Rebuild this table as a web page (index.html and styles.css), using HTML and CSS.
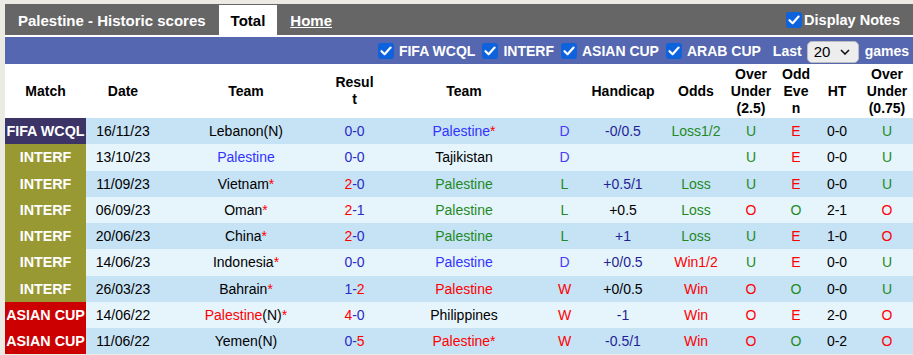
FILE: index.html
```
<!DOCTYPE html>
<html>
<head>
<meta charset="utf-8">
<link rel="stylesheet" href="styles.css">
</head>
<body>
<div class="page">
  <div class="topbar">
    <span class="title">Palestine - Historic scores</span>
    <span class="tab active">Total</span>
    <span class="tab link">Home</span>
    <span class="notes"><span class="cb"><svg viewBox="0 0 16 16" width="16" height="16"><path d="M3.5 8.2 L6.6 11.2 L12.6 4.6" fill="none" stroke="#fff" stroke-width="2.2" stroke-linecap="round" stroke-linejoin="round"/></svg></span>Display Notes</span>
  </div>
  <div class="filterbar">
    <span class="flt"><span class="cb"><svg viewBox="0 0 16 16" width="16" height="16"><path d="M3.5 8.2 L6.6 11.2 L12.6 4.6" fill="none" stroke="#fff" stroke-width="2.2" stroke-linecap="round" stroke-linejoin="round"/></svg></span>FIFA WCQL</span>
    <span class="flt"><span class="cb"><svg viewBox="0 0 16 16" width="16" height="16"><path d="M3.5 8.2 L6.6 11.2 L12.6 4.6" fill="none" stroke="#fff" stroke-width="2.2" stroke-linecap="round" stroke-linejoin="round"/></svg></span>INTERF</span>
    <span class="flt"><span class="cb"><svg viewBox="0 0 16 16" width="16" height="16"><path d="M3.5 8.2 L6.6 11.2 L12.6 4.6" fill="none" stroke="#fff" stroke-width="2.2" stroke-linecap="round" stroke-linejoin="round"/></svg></span>ASIAN CUP</span>
    <span class="flt"><span class="cb"><svg viewBox="0 0 16 16" width="16" height="16"><path d="M3.5 8.2 L6.6 11.2 L12.6 4.6" fill="none" stroke="#fff" stroke-width="2.2" stroke-linecap="round" stroke-linejoin="round"/></svg></span>ARAB CUP</span>
    <span class="last">Last</span>
    <span class="select">20<svg viewBox="0 0 10 6" width="10" height="6"><path d="M1 1 L5 5 L9 1" fill="none" stroke="#111" stroke-width="1.6"/></svg></span>
    <span class="games">games</span>
  </div>
  <table class="scores">
    <colgroup>
      <col class="c-match"><col class="c-date"><col class="c-team"><col class="c-res"><col class="c-team2"><col class="c-wl"><col class="c-hc"><col class="c-odds"><col class="c-ou"><col class="c-oe"><col class="c-ht"><col class="c-ou2">
    </colgroup>
    <thead>
      <tr>
        <th>Match</th><th>Date</th><th>Team</th><th>Resul t</th><th>Team</th><th></th><th>Handicap</th><th>Odds</th><th>Over Under (2.5)</th><th>Odd Eve n</th><th>HT</th><th>Over Under (0.75)</th>
      </tr>
    </thead>
    <tbody>
      <tr class="dk">
        <td class="lg wcql">FIFA WCQL</td><td>16/11/23</td><td>Lebanon(N)</td><td class="sc">0-0</td><td><span class="bl">Palestine</span><span class="r">*</span></td><td class="dd">D</td><td class="nv">-0/0.5</td><td class="g">Loss1/2</td><td class="g">U</td><td class="r">E</td><td>0-0</td><td class="g">U</td>
      </tr>
      <tr class="lt">
        <td class="lg interf">INTERF</td><td>13/10/23</td><td class="bl">Palestine</td><td class="sc">0-0</td><td>Tajikistan</td><td class="dd">D</td><td></td><td></td><td class="g">U</td><td class="r">E</td><td>0-0</td><td class="g">U</td>
      </tr>
      <tr class="dk">
        <td class="lg interf">INTERF</td><td>11/09/23</td><td>Vietnam<span class="r">*</span></td><td class="sc"><span class="r">2</span>-0</td><td class="g">Palestine</td><td class="g">L</td><td class="nv">+0.5/1</td><td class="g">Loss</td><td class="g">U</td><td class="r">E</td><td>0-0</td><td class="g">U</td>
      </tr>
      <tr class="lt">
        <td class="lg interf">INTERF</td><td>06/09/23</td><td>Oman<span class="r">*</span></td><td class="sc"><span class="r">2</span>-1</td><td class="g">Palestine</td><td class="g">L</td><td>+0.5</td><td class="g">Loss</td><td class="r">O</td><td class="g">O</td><td>2-1</td><td class="r">O</td>
      </tr>
      <tr class="dk">
        <td class="lg interf">INTERF</td><td>20/06/23</td><td>China<span class="r">*</span></td><td class="sc"><span class="r">2</span>-0</td><td class="g">Palestine</td><td class="g">L</td><td class="nv">+1</td><td class="g">Loss</td><td class="g">U</td><td class="r">E</td><td>1-0</td><td class="r">O</td>
      </tr>
      <tr class="lt">
        <td class="lg interf">INTERF</td><td>14/06/23</td><td>Indonesia<span class="r">*</span></td><td class="sc">0-0</td><td class="bl">Palestine</td><td class="dd">D</td><td class="nv">+0/0.5</td><td class="r">Win1/2</td><td class="g">U</td><td class="r">E</td><td>0-0</td><td class="g">U</td>
      </tr>
      <tr class="dk">
        <td class="lg interf">INTERF</td><td>26/03/23</td><td>Bahrain<span class="r">*</span></td><td class="sc">1-<span class="r">2</span></td><td class="r">Palestine</td><td class="r">W</td><td>+0/0.5</td><td class="r">Win</td><td class="r">O</td><td class="g">O</td><td>0-0</td><td class="g">U</td>
      </tr>
      <tr class="lt">
        <td class="lg asian">ASIAN CUP</td><td>14/06/22</td><td><span class="r">Palestine</span>(N)<span class="r">*</span></td><td class="sc"><span class="r">4</span>-0</td><td>Philippines</td><td class="r">W</td><td class="nv">-1</td><td class="r">Win</td><td class="r">O</td><td class="r">E</td><td>2-0</td><td class="r">O</td>
      </tr>
      <tr class="dk">
        <td class="lg asian">ASIAN CUP</td><td>11/06/22</td><td>Yemen(N)</td><td class="sc">0-<span class="r">5</span></td><td class="r">Palestine*</td><td class="r">W</td><td class="nv">-0.5/1</td><td class="r">Win</td><td class="r">O</td><td class="g">O</td><td>0-2</td><td class="r">O</td>
      </tr>
    </tbody>
  </table>
</div>
</body>
</html>
```
FILE: styles.css
```
html, body {
  margin: 0;
  padding: 0;
  background: #ebebe4;
  font-family: "Liberation Sans", Arial, sans-serif;
  overflow: hidden;
}
.page {
  margin: 4px 0 0 5px;
  width: 908px;
}
.topbar {
  display: flex;
  align-items: stretch;
  height: 30px;
  padding-top: 1px;
  background: #666666;
  border-bottom: 2px solid #ffffff;
  color: #fff;
  font-weight: bold;
  font-size: 15px;
}
.title {
  display: flex;
  align-items: center;
  padding-left: 13px;
  padding-right: 13px;
}
.tab {
  display: flex;
  align-items: center;
  padding: 0 12px;
}
.tab.active {
  background: #fff;
  color: #000;
}
.tab.link {
  text-decoration: underline;
  padding-left: 13px;
}
.notes {
  margin-left: auto;
  display: flex;
  align-items: center;
  font-size: 14.5px;
  padding-right: 13px;
}
.cb {
  display: inline-flex;
  width: 16px;
  height: 16px;
  background: #0e63dc;
  border-radius: 3px;
  margin-right: 2px;
}
.filterbar {
  display: flex;
  align-items: center;
  justify-content: flex-end;
  height: 27px;
  background: #5467b0;
  color: #fff;
  font-weight: bold;
  font-size: 14px;
  padding-right: 4px;
}
.flt {
  display: flex;
  align-items: center;
  margin-left: 7px;
}
.flt .cb {
  margin-right: 5px;
}
.last {
  margin-left: 12px;
}
.select {
  display: inline-flex;
  align-items: center;
  justify-content: space-between;
  box-sizing: border-box;
  width: 52px;
  height: 22px;
  margin: 2px 6px 0 5px;
  padding: 0 8px 0 6px;
  background: #ededed;
  border: 1px solid #bdbdbd;
  border-radius: 5px;
  color: #000;
  font-weight: normal;
  font-size: 15px;
}
.scores {
  border-collapse: collapse;
  table-layout: fixed;
  width: 909px;
  font-size: 14px;
}
.c-match { width: 81px; }
.c-date { width: 74px; }
.c-team { width: 172px; }
.c-res { width: 45px; }
.c-team2 { width: 174px; }
.c-wl { width: 27px; }
.c-hc { width: 90px; }
.c-odds { width: 56px; }
.c-ou { width: 54px; }
.c-oe { width: 36px; }
.c-ht { width: 46px; }
.c-ou2 { width: 54px; }
.scores th {
  background: #fff;
  height: 54px;
  padding: 0 2px;
  font-weight: bold;
  line-height: 17px;
  text-align: center;
  vertical-align: middle;
  color: #000;
}
.scores td {
  height: 26.25px;
  padding: 0;
  text-align: center;
  vertical-align: middle;
  line-height: 16px;
  color: #000;
  white-space: nowrap;
}
tr.dk td { background: #c6e2f5; }
tr.lt td { background: #e6f4fc; }
.scores td.lg {
  color: #fff;
  font-weight: bold;
  font-size: 14.3px;
}
tr td.wcql { background: #3c3366; }
tr td.interf { background: #999933; }
tr td.asian { background: #cc0000; }
.scores .r { color: #ff0000; }
.scores .g { color: #1f8a1f; }
.scores .bl { color: #3333ff; }
.scores .dd { color: #4a3cf5; }
.scores .sc { color: #2a2ac8; }
.scores .nv { color: #1f1f96; }
```
